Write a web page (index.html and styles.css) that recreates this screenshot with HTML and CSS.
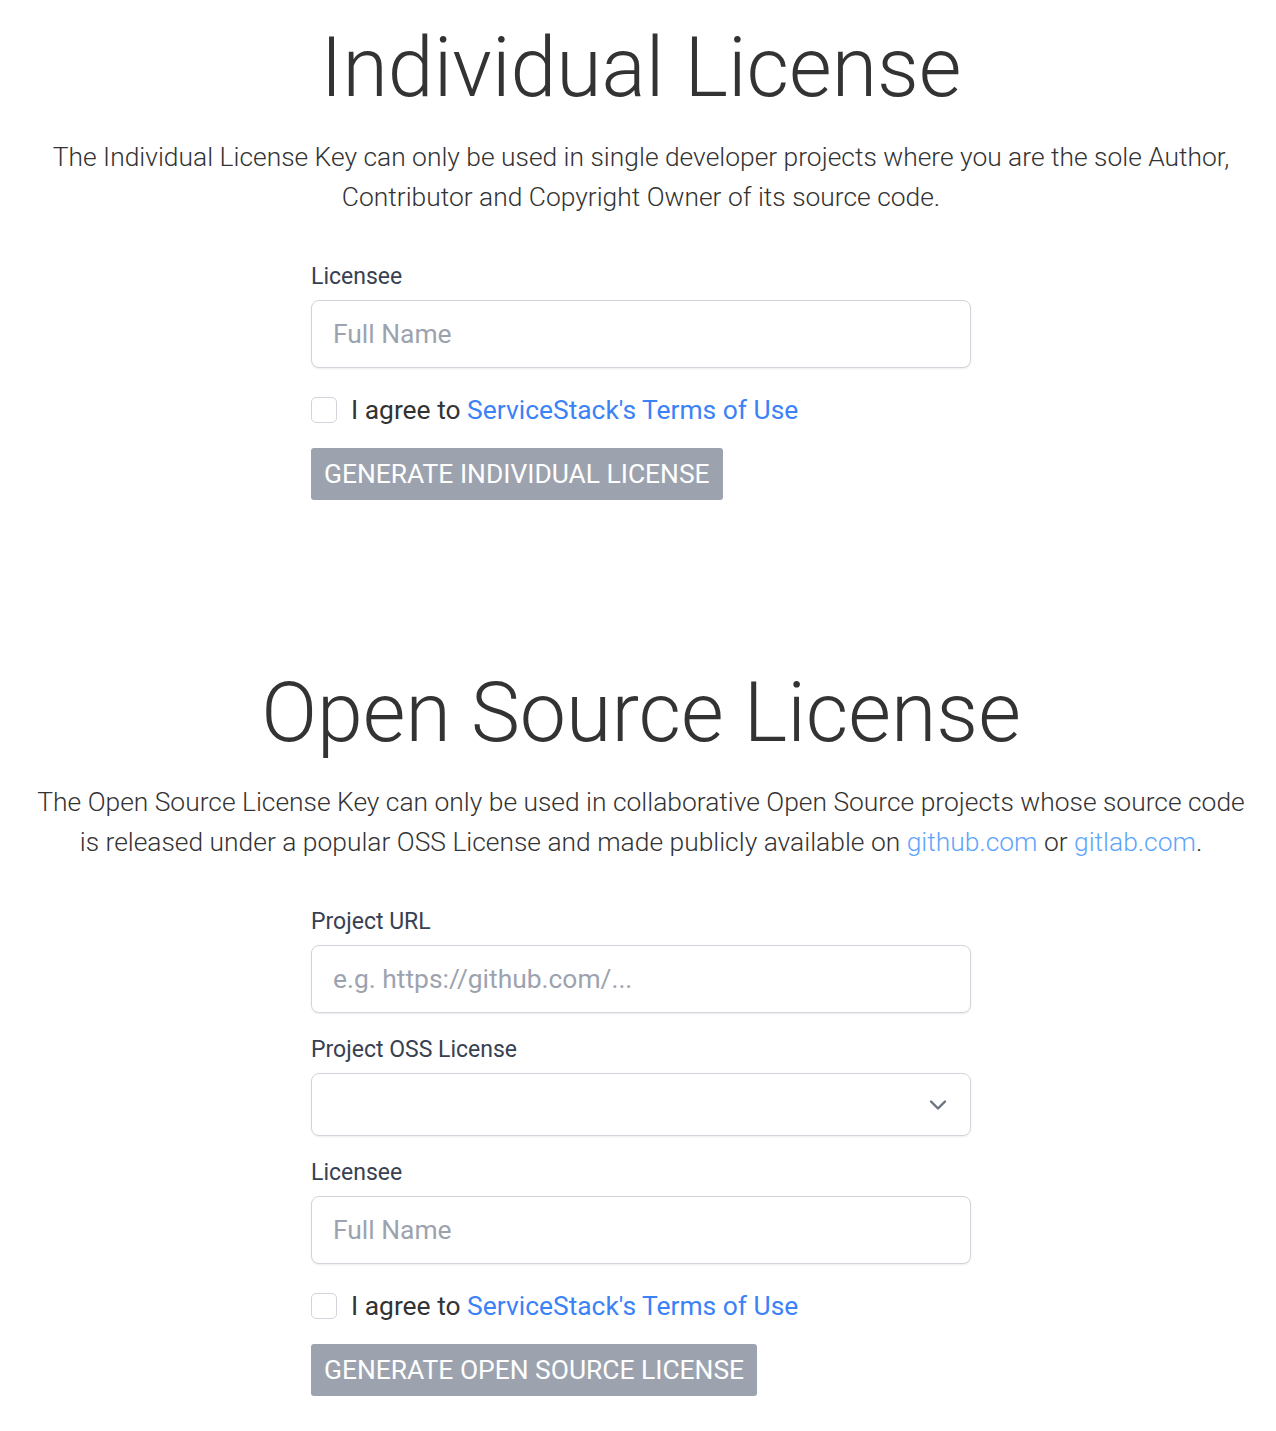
FILE: index.html
```html
<!DOCTYPE html>
<html>
<head>
<meta charset="utf-8">
<link rel="stylesheet" href="styles.css">
</head>
<body>
<main class="page">
  <section class="license">
    <h1 class="title">Individual License</h1>
    <p class="lead">The Individual License Key can only be used in single developer projects where you are the sole Author, Contributor and Copyright Owner of its source code.</p>
    <form class="form">
      <div class="field">
        <label class="label">Licensee</label>
        <input class="input" type="text" placeholder="Full Name">
      </div>
      <label class="agree"><span class="checkbox"></span><span>I agree to <a class="link" href="#">ServiceStack's Terms of Use</a></span></label>
      <div><button class="btn" type="button">Generate Individual License</button></div>
    </form>
  </section>
  <section class="license second">
    <h1 class="title">Open Source License</h1>
    <p class="lead">The Open Source License Key can only be used in collaborative Open Source projects whose source code is released under a popular OSS License and made publicly available on <a class="link" href="#">github.com</a> or <a class="link" href="#">gitlab.com</a>.</p>
    <form class="form">
      <div class="field">
        <label class="label">Project URL</label>
        <input class="input" type="text" placeholder="e.g. https://github.com/...">
      </div>
      <div class="field">
        <label class="label">Project OSS License</label>
        <div class="select">
          <svg class="chev" width="20" height="20" viewBox="0 0 20 20"><path d="M3 6.5l7 7 7-7" fill="none" stroke="#6b7280" stroke-width="2.4" stroke-linecap="round" stroke-linejoin="round"/></svg>
        </div>
      </div>
      <div class="field">
        <label class="label">Licensee</label>
        <input class="input" type="text" placeholder="Full Name">
      </div>
      <label class="agree"><span class="checkbox"></span><span>I agree to <a class="link" href="#">ServiceStack's Terms of Use</a></span></label>
      <div><button class="btn" type="button">Generate Open Source License</button></div>
    </form>
  </section>
</main>
</body>
</html>
```

FILE: styles.css
```css
html, body {
  margin: 0;
  padding: 0;
  background: #fff;
}
body {
  font-family: Roboto, "Liberation Sans", Arial, sans-serif;
  color: #333;
}
.page {
  padding: 0 16px 0 22px;
}
.license {
  text-align: center;
  padding-top: 20px;
}
.second {
  padding-top: 165px;
}
.title {
  font-size: 82.5px;
  font-weight: 300;
  line-height: 96px;
  margin: 0;
  color: #333;
}
.lead {
  font-size: 26.4px;
  font-weight: 300;
  line-height: 40px;
  margin: 21px auto 0;
  max-width: 1216px;
  color: #333;
}
.form {
  width: 660px;
  margin: 46px auto 0;
  text-align: left;
  display: flex;
  flex-direction: column;
  gap: 23px;
}
.field {
  display: flex;
  flex-direction: column;
  gap: 9px;
}
.label {
  font-size: 23px;
  line-height: 28px;
  color: #374151;
}
.input {
  box-sizing: border-box;
  height: 68px;
  width: 100%;
  border: 1px solid #d1d5db;
  border-radius: 8px;
  box-shadow: 0 1px 2px rgba(0,0,0,0.08);
  padding: 0 21px;
  font-family: inherit;
  font-size: 26.4px;
  color: #111;
  outline: none;
}
.input::placeholder {
  color: #9ca3af;
}
.select {
  box-sizing: border-box;
  height: 63px;
  width: 100%;
  border: 1px solid #d1d5db;
  border-radius: 8px;
  box-shadow: 0 1px 2px rgba(0,0,0,0.08);
  display: flex;
  align-items: center;
  justify-content: flex-end;
  padding-right: 22px;
}
.agree {
  display: flex;
  align-items: center;
  gap: 14px;
  font-size: 26.4px;
  line-height: 30px;
  color: #333;
  margin-top: 4px;
}
.checkbox {
  box-sizing: border-box;
  width: 26px;
  height: 26px;
  border: 1px solid #d1d5db;
  border-radius: 5px;
  background: #fff;
}
.link {
  color: #3b82f6;
  text-decoration: none;
}
.lead .link {
  color: #60a5fa;
}
.btn {
  background: #9ca3af;
  color: #fff;
  border: none;
  border-radius: 3px;
  height: 52px;
  padding: 0 13px;
  font-family: inherit;
  font-size: 26.4px;
  text-transform: uppercase;
  cursor: pointer;
  margin-top: 0;
}
```
